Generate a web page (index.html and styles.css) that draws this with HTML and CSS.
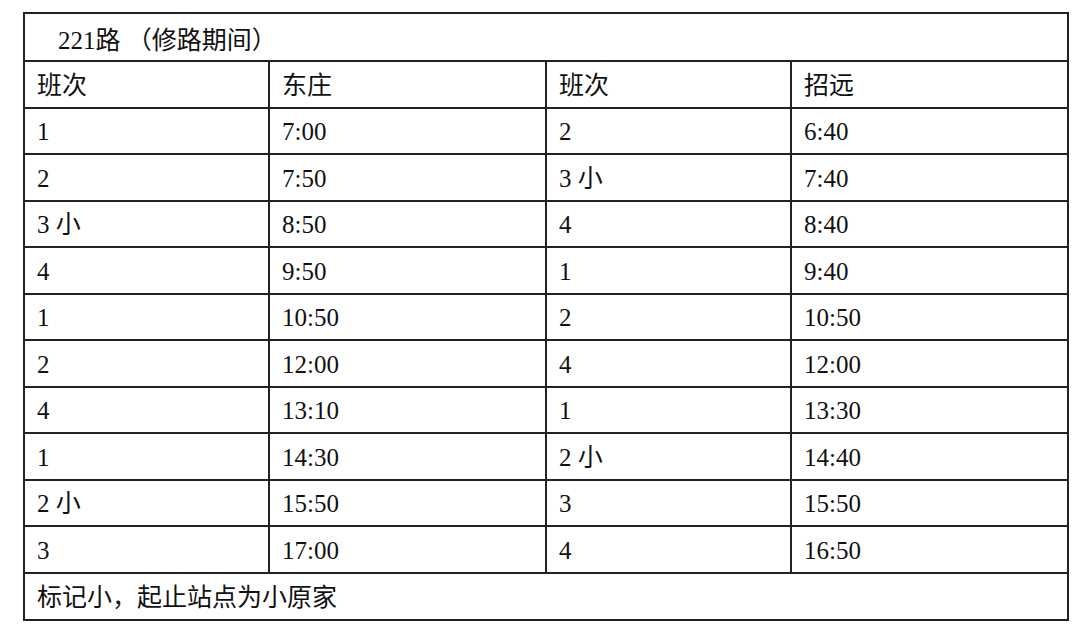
FILE: index.html
```html
<!DOCTYPE html>
<html lang="zh-CN">
<head>
<meta charset="utf-8">
<title>221路（修路期间）</title>
<link rel="stylesheet" href="styles.css">
</head>
<body>
<div class="page">
<table class="timetable">
  <colgroup>
    <col class="c-narrow"><col class="c-wide"><col class="c-narrow"><col class="c-wide">
  </colgroup>
  <tr class="r-title"><td colspan="4" class="title">221路 （修路期间）</td></tr>
  <tr class="r-row"><td>班次</td><td>东庄</td><td>班次</td><td>招远</td></tr>
  <tr class="r-row"><td>1</td><td>7:00</td><td>2</td><td>6:40</td></tr>
  <tr class="r-row"><td>2</td><td>7:50</td><td>3 小</td><td>7:40</td></tr>
  <tr class="r-row"><td>3 小</td><td>8:50</td><td>4</td><td>8:40</td></tr>
  <tr class="r-row"><td>4</td><td>9:50</td><td>1</td><td>9:40</td></tr>
  <tr class="r-row"><td>1</td><td>10:50</td><td>2</td><td>10:50</td></tr>
  <tr class="r-row"><td>2</td><td>12:00</td><td>4</td><td>12:00</td></tr>
  <tr class="r-row"><td>4</td><td>13:10</td><td>1</td><td>13:30</td></tr>
  <tr class="r-row"><td>1</td><td>14:30</td><td>2 小</td><td>14:40</td></tr>
  <tr class="r-row"><td>2 小</td><td>15:50</td><td>3</td><td>15:50</td></tr>
  <tr class="r-row"><td>3</td><td>17:00</td><td>4</td><td>16:50</td></tr>
  <tr class="r-foot"><td colspan="4">标记小，起止站点为小原家</td></tr>
</table>
</div>
</body>
</html>
```
FILE: styles.css
```css
html, body {
  margin: 0;
  padding: 0;
  background: #ffffff;
}
.page {
  padding: 12px 0 0 23px;
}
.timetable {
  border-collapse: collapse;
  table-layout: fixed;
  width: 1045px;
  border: 2.5px solid #111;
  font-family: "Liberation Serif", "Noto Sans CJK SC", serif;
  font-size: 25px;
  color: #111;
}
.c-narrow { width: 245px; }
.c-wide { width: 277px; }
.timetable td {
  border: 2px solid #222;
  padding: 2px 12px 0 12px;
  vertical-align: middle;
  line-height: 1;
  white-space: nowrap;
}
.r-title { height: 48px; }
.r-row { height: 46.5px; }
.r-foot { height: 47px; }
.timetable td.title {
  padding-left: 33px;
  padding-top: 6px;
}
```
